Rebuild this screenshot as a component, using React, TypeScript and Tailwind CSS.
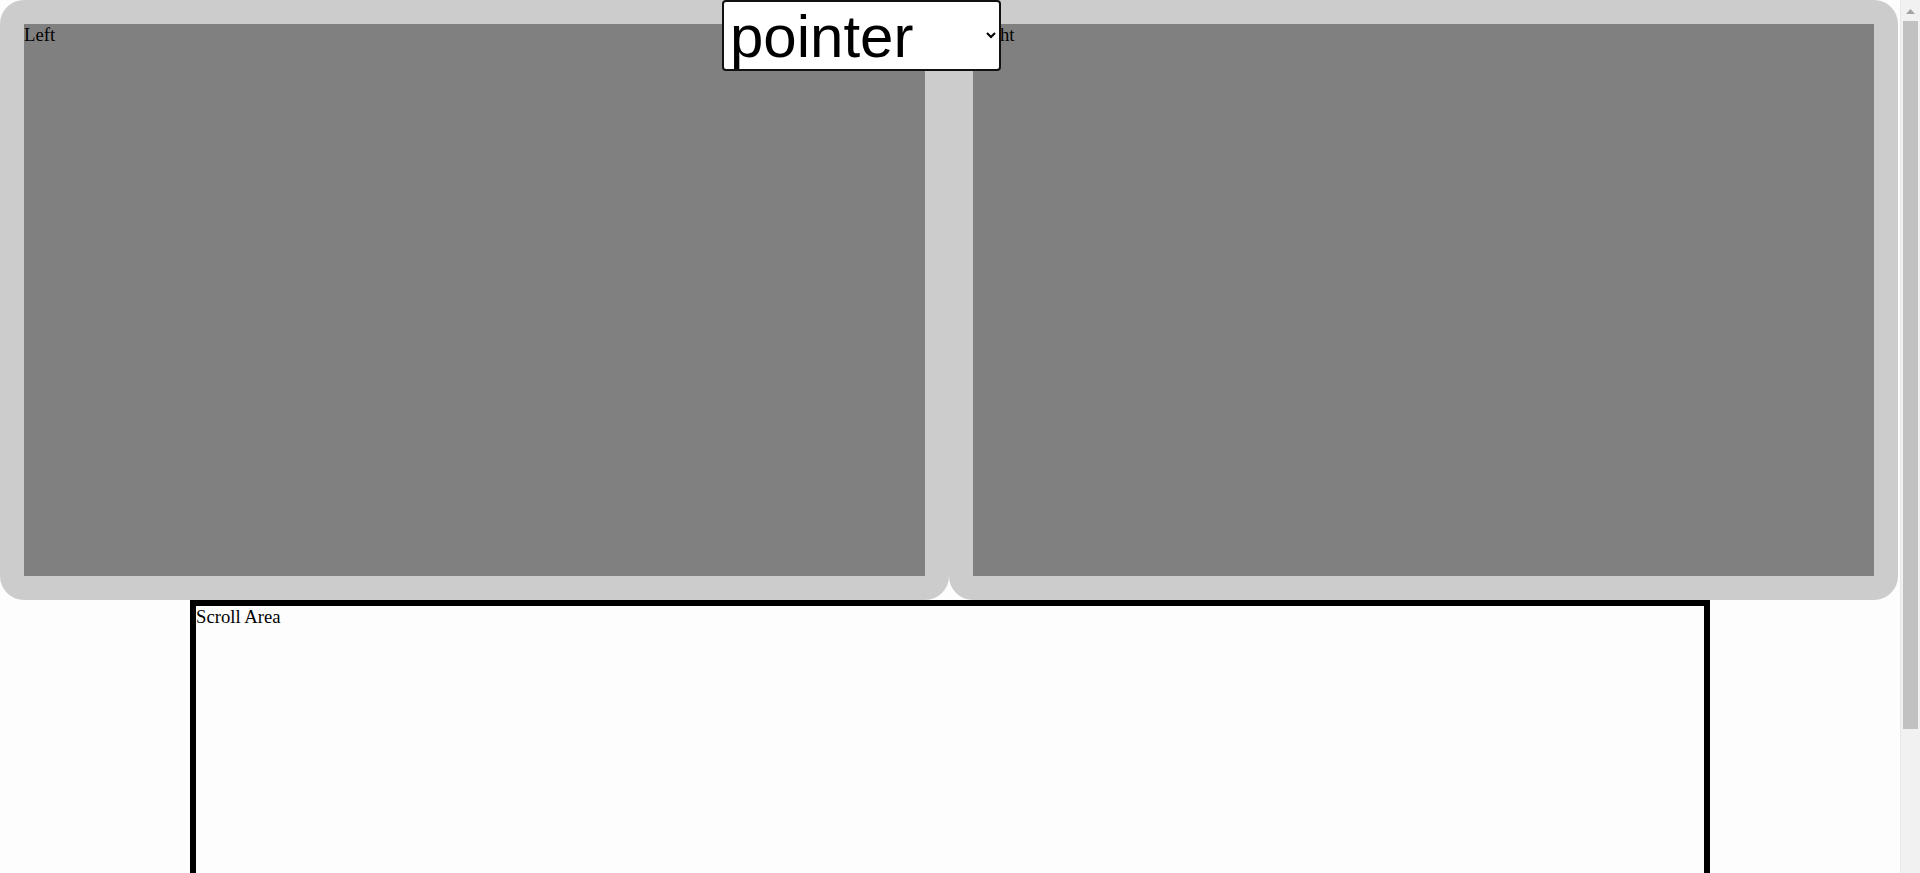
import { useState } from 'react';

const App = () => {
    const [ cursor, setCursor ] = useState('pointer');

    return (
        <div className="flex h-screen bg-[#fdfdfd]" style={{ fontFamily: '"Liberation Serif", serif' }}>
            <div className="flex-1 min-w-0 overflow-y-auto">
                <div className="relative">
                    <div className="flex h-[600px] pr-[2px]">
                        <div className="flex-1 p-6 bg-[#cccccc] rounded-3xl">
                            <div className="h-full bg-[#808080] text-black text-[18.7px] leading-[1.15]">Left</div>
                        </div>
                        <div className="flex-1 p-6 bg-[#cccccc] rounded-3xl">
                            <div className="h-full bg-[#808080] text-black text-[18.7px] leading-[1.15]">Right</div>
                        </div>
                    </div>

                    <select
                        value={ cursor }
                        onChange={ (e) => setCursor(e.target.value) }
                        className="absolute top-0 left-[722px] w-[279px] h-[71px] pl-[2px] bg-white text-black text-[60px] border-2 border-[#111] rounded-[4px] font-['Liberation_Sans',sans-serif]"
                    >
                        <option value="pointer">pointer</option>
                        <option value="default">default</option>
                        <option value="crosshair">crosshair</option>
                        <option value="move">move</option>
                    </select>

                    <div className="mx-auto w-4/5 h-[50vh] border-[6px] border-black overflow-auto bg-[#fdfdfd] text-black text-[18.7px] leading-[1.15]">
                        Scroll Area
                    </div>
                </div>
            </div>

            {/* scrollbar */}
            <div className="w-5 shrink-0 flex flex-col bg-[#f1f1f1] border-l border-[#e8e8e8]">
                <div className="h-[21px] flex justify-center pt-[9px]">
                    <svg width="9" height="5" viewBox="0 0 9 5">
                        <polygon points="4.5,0 9,5 0,5" fill="#a3a3a3" />
                    </svg>
                </div>
                <div className="h-[708px] mx-[2px] bg-[#c1c1c1]" />
            </div>
        </div>
    )
}

export default App
